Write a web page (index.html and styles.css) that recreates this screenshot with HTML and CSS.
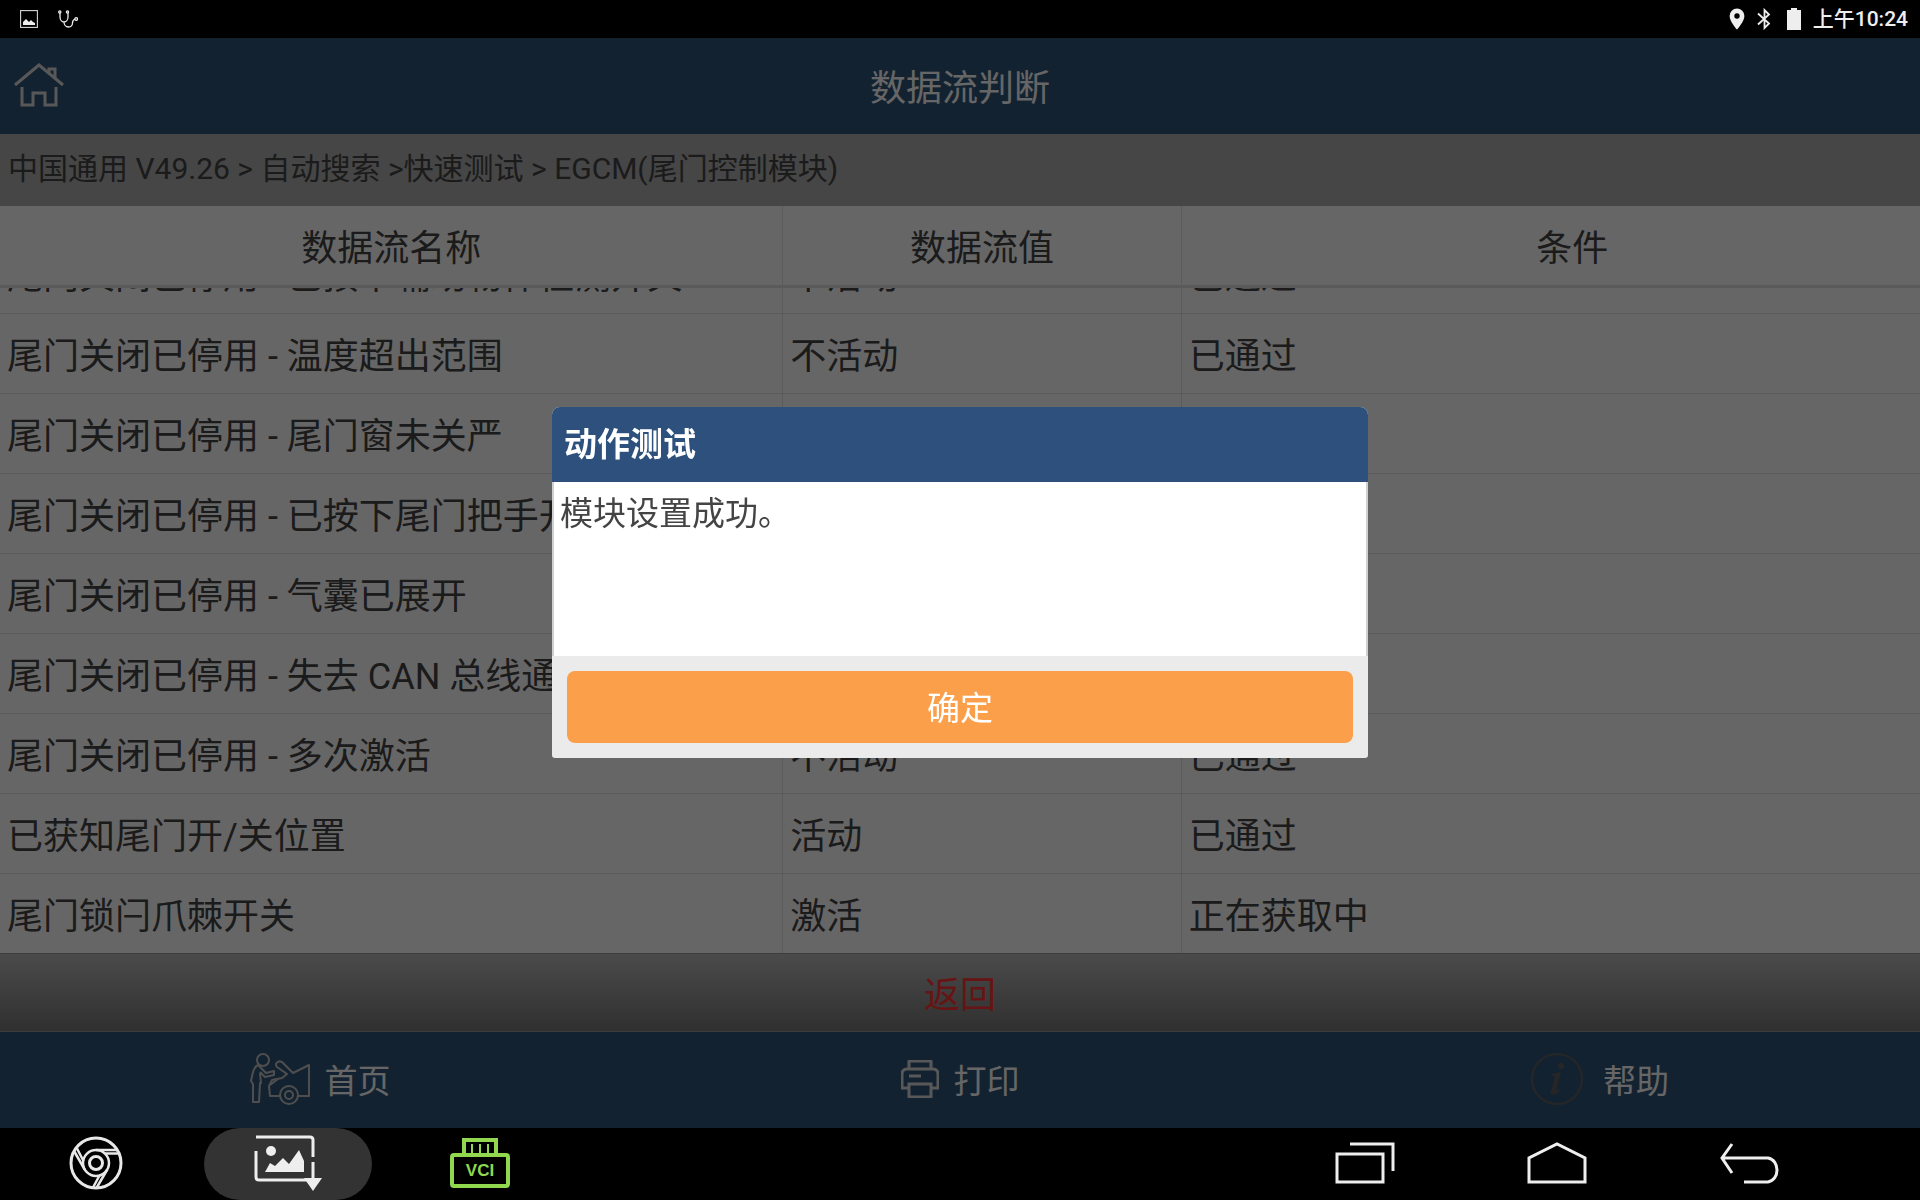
FILE: index.html
```html
<!DOCTYPE html>
<html lang="zh-CN">
<head>
    <meta charset="UTF-8">
    <meta name="viewport" content="width=device-width, initial-scale=1.0">
    <title>数据流判断</title>
    <link rel="stylesheet" href="styles.css">
</head>
<body>
    <!-- system status bar -->
    <div class="status-bar">
        <div class="status-left">
            <svg width="18" height="18" viewBox="0 0 18 18">
                <rect x="0.500" y="0.500" width="17" height="17" fill="none" stroke="#ccc" stroke-width="1.300"/>
                <path d="M3 15v-3l3-3 3 3 2-2 2 2 2 1v2z" fill="#eee"/>
            </svg>
            <svg width="20" height="18" viewBox="0 0 20 18" fill="none" stroke="#eee" stroke-width="1.3">
                <circle cx="1.8" cy="2" r="1.1"/>
                <circle cx="9.5" cy="2" r="1.1"/>
                <circle cx="18.2" cy="9" r="1.3"/>
                <path d="M2 3v4c0 3 2 5 4 5s4-2 4-5V3M6 12c0 3 2 5 4.500 5s4-2 4-4c0-2 1-3.500 2.500-4"/>
            </svg>
        </div>
        <div class="status-right">
            <svg width="16" height="22" viewBox="0 0 16 22">
                <path fill-rule="evenodd" d="M8 0.500A7.400 7.400 0 0 0 .6 8C.6 13.500 8 21.500 8 21.500S15.400 13.500 15.400 8A7.400 7.400 0 0 0 8 .5zM8 5.300a2.700 2.700 0 1 1 0 5.400 2.700 2.700 0 0 1 0-5.400z" fill="#eee"/>
            </svg>
            <svg width="18" height="22" viewBox="0 0 18 22" fill="none" stroke="#eee" stroke-width="1.800">
                <path d="M1 5.500l11 10-4.500 4.500V2l4.500 4.500-11 10"/>
            </svg>
            <svg width="14" height="22" viewBox="0 0 14 22">
                <path d="M4 0h6v2h4v20H0V2h4z" fill="#eee"/>
            </svg>
            <span class="clock">上午10:24</span>
        </div>
    </div>

    <div class="app">
        <header>
            <button class="home-btn" aria-label="主页">
                <svg width="50" height="44" viewBox="0 0 50 44" fill="none" stroke="#ddd" stroke-width="3">
                    <path d="M1 22L25 2l24 20"/>
                    <path d="M35 10V6h6v10"/>
                    <path d="M8 24v18h11V30h12v12h11V24"/>
                </svg>
            </button>
            <h1>数据流判断</h1>
        </header>

        <div class="breadcrumb">中国通用 V49.26 &gt; 自动搜索 &gt;快速测试 &gt; EGCM(尾门控制模块)</div>

        <div class="table-wrap" id="tableWrap">
            <table>
                <colgroup>
                    <col class="col-name">
                    <col class="col-value">
                    <col>
                </colgroup>
                <thead>
                    <tr>
                        <th>数据流名称</th>
                        <th>数据流值</th>
                        <th>条件</th>
                    </tr>
                </thead>
                <tbody>
                    <tr>
                        <td>尾门关闭已停用 - 已按下辅助物体检测开关</td>
                        <td>不活动</td>
                        <td>已通过</td>
                    </tr>
                    <tr>
                        <td>尾门关闭已停用 - 温度超出范围</td>
                        <td>不活动</td>
                        <td>已通过</td>
                    </tr>
                    <tr>
                        <td>尾门关闭已停用 - 尾门窗未关严</td>
                        <td>不活动</td>
                        <td>已通过</td>
                    </tr>
                    <tr>
                        <td>尾门关闭已停用 - 已按下尾门把手开关</td>
                        <td>不活动</td>
                        <td>已通过</td>
                    </tr>
                    <tr>
                        <td>尾门关闭已停用 - 气囊已展开</td>
                        <td>不活动</td>
                        <td>已通过</td>
                    </tr>
                    <tr>
                        <td>尾门关闭已停用 - 失去 CAN 总线通信</td>
                        <td>不活动</td>
                        <td>已通过</td>
                    </tr>
                    <tr>
                        <td>尾门关闭已停用 - 多次激活</td>
                        <td>不活动</td>
                        <td>已通过</td>
                    </tr>
                    <tr>
                        <td>已获知尾门开/关位置</td>
                        <td>活动</td>
                        <td>已通过</td>
                    </tr>
                    <tr>
                        <td>尾门锁闩爪棘开关</td>
                        <td>激活</td>
                        <td>正在获取中</td>
                    </tr>
                </tbody>
            </table>
        </div>

        <button class="back-btn">返回</button>

        <footer>
            <button class="footer-btn">
                <svg width="60" height="52" viewBox="0 0 60 52" fill="none" stroke="#c4c4c4" stroke-width="2" stroke-linejoin="round">
                    <circle cx="13" cy="7" r="6"/>
                    <path d="M8 12c-4 2-5 6-7 16l2 3v18h6l1-19 1 0-1-10M8 12l3 3 5 5 8-2v4l-9 2-5-5"/>
                    <path d="M30 43H20l-1-10 3-6 10-2 5-4-10-7c-3-3 1-7 5-5l11 11 16-8v31H48"/>
                    <path d="M20 32l8-6"/>
                    <circle cx="39" cy="42" r="9"/>
                    <circle cx="39" cy="42" r="4"/>
                </svg>
                首页
            </button>
            <button class="footer-btn">
                <svg width="38" height="38" viewBox="0 0 38 38" fill="none" stroke="#ddd" stroke-width="3">
                    <path d="M8 9V1h22v8"/>
                    <path d="M8 28H1V14c0-3 2-5 5-5h26c3 0 5 2 5 5v14h-7"/>
                    <path d="M8 24h22v13H8z"/>
                    <path d="M8 16h12"/>
                </svg>
                打印
            </button>
            <button class="footer-btn help">
                <svg width="52" height="52" viewBox="0 0 52 52">
                    <circle cx="26" cy="26" r="25" fill="none" stroke="#626060" stroke-width="2"/>
                    <circle cx="30" cy="13" r="3" fill="#626060"/>
                    <path d="M21 21l9-2-5 19 4-2-1 3c-3 3-9 4-8 0l4-16-4 0z" fill="#626060"/>
                </svg>
                帮助
            </button>
        </footer>

        <!-- Modal Structure -->
        <div class="modal" id="modal">
            <div class="modal-content" role="dialog" aria-labelledby="modalTitle">
                <h2 id="modalTitle">动作测试</h2>
                <p>模块设置成功。</p>
                <div class="modal-footer">
                    <button class="ok-btn" id="okBtn">确定</button>
                </div>
            </div>
        </div>
    </div>

    <!-- system navigation bar -->
    <nav>
        <button class="nav-btn" aria-label="Chrome">
            <svg width="54" height="54" viewBox="0 0 54 54" fill="none" stroke="#e8e8e8" stroke-width="2.500">
                <circle cx="27" cy="27" r="25" stroke-width="3"/>
                <circle cx="27" cy="27" r="13"/>
                <circle cx="27" cy="27" r="6.500" stroke-width="3"/>
                <path d="M27 14h21.500M36 17.500h14"/>
                <path d="M15.700 33.500L5 15M14.500 25L8 12.500"/>
                <path d="M38.300 33.500L27.500 52M30.500 39.500L24 51.500"/>
            </svg>
        </button>
        <button class="nav-btn active" aria-label="截图">
            <svg width="70" height="58" viewBox="0 0 70 58" fill="none" stroke="#eee" stroke-width="3">
                <path d="M3 3h54q3 0 3 3v17M60 28v18M3 17v26q0 3 3 3h48"/>
                <circle cx="18" cy="17" r="5" fill="#eee" stroke="none"/>
                <path d="M12 38l5-9 5 3 8-8 6 6 10-14 5 11v11z" fill="#eee" stroke="none"/>
                <path d="M51 44h18l-9 13z" fill="#eee" stroke="none"/>
            </svg>
        </button>
        <button class="nav-btn" aria-label="VCI">
            <svg width="60" height="50" viewBox="0 0 60 50" fill="none" stroke="#92d84e" stroke-width="4">
                <rect x="2" y="17" width="56" height="31" rx="2"/>
                <path d="M14 16V2h32v14"/>
                <path d="M22 6v9M30 6v9M38 6v9" stroke-width="2"/>
                <text x="30" y="38" class="vci-text">VCI</text>
            </svg>
        </button>
        <div class="nav-space"></div>
        <button class="nav-btn" aria-label="最近任务">
            <svg width="60" height="42" viewBox="0 0 60 42" fill="none" stroke="#eee" stroke-width="3">
                <path d="M2 12h46v28H2zM15 2h43v27"/>
            </svg>
        </button>
        <button class="nav-btn" aria-label="主屏幕">
            <svg width="60" height="42" viewBox="0 0 60 42" fill="none" stroke="#eee" stroke-width="3">
                <path d="M2 40V16L30 2l28 14v24z"/>
            </svg>
        </button>
        <button class="nav-btn" aria-label="后退">
            <svg width="60" height="42" viewBox="0 0 60 42" fill="none" stroke="#eee" stroke-width="3">
                <path d="M13 2L3 16l10 15M3 16h46c12 2 12 22 0 24H25"/>
            </svg>
        </button>
    </nav>

    <script>
        // Show the newest rows
        var tableWrap = document.getElementById("tableWrap");
        tableWrap.scrollTop = tableWrap.scrollHeight;

        document.getElementById("okBtn").onclick = function() {
            document.getElementById("modal").style.display = "none";
        }
    </script>
</body>
</html>
```
FILE: styles.css
```css
* {
    box-sizing: border-box;
}

body {
    margin: 0;
    height: 100vh;
    display: flex;
    flex-direction: column;
    background-color: #000;
    color: #444;
    font-family: Roboto, "Noto Sans CJK SC", sans-serif;
    font-size: 36px;
}

button {
    font-family: inherit;
    border: none;
    padding: 0 0 2px;
    cursor: pointer;
}

svg {
    display: block;
    flex-shrink: 0;
}

/* Status bar */
.status-bar {
    height: 38px;
    padding: 0 12px 0 20px;
    display: flex;
    align-items: center;
    justify-content: space-between;
}

.status-left {
    display: flex;
    gap: 20px;
}

.status-right {
    display: flex;
    align-items: center;
    gap: 12px;
}

.clock {
    color: #eee;
    font-size: 21px;
    font-weight: 500;
    line-height: 24px;
}

/* App */
.app {
    flex: 1;
    min-height: 0;
    position: relative;
    display: flex;
    flex-direction: column;
    background-color: #fff;
}

header {
    height: 96px;
    flex-shrink: 0;
    display: grid;
    grid-template-columns: 1fr auto 1fr;
    align-items: center;
    padding: 0 14px 2px;
    background-color: #305578;
}

.home-btn {
    justify-self: start;
    padding: 0;
    background: none;
}

h1 {
    margin: 0;
    color: #fff;
    font-size: 36px;
    font-weight: 400;
}

.breadcrumb {
    padding: 0 8px 2px;
    font-size: 30px;
    line-height: 70px;
    flex-shrink: 0;
    background-color: #afafaf;
}

.table-wrap {
    flex: 1;
    min-height: 0;
    overflow-y: auto;
    scrollbar-width: none;
}

table {
    width: 100%;
    table-layout: fixed;
    border-collapse: separate;
    border-spacing: 0;
}

.col-name {
    width: 40.8%;
}

.col-value {
    width: 20.75%;
}

th, td {
    height: 80px;
    padding: 0 7px 2px;
    font-weight: 400;
    text-align: left;
    white-space: nowrap;
    border-right: 1px solid #e4e4e4;
}

td {
    border-top: 1px solid #e4e4e4;
}

th:last-child, td:last-child {
    border-right: none;
}

th {
    position: sticky;
    top: 0;
    height: 82px;
    text-align: center;
    background-color: #fff;
    border-bottom: 3px solid #e0e0e0;
}

th:last-child {
    padding-left: 50px;
}

.back-btn {
    height: 79px;
    flex-shrink: 0;
    color: #f33;
    font-size: 36px;
    background: linear-gradient(180deg, #bbb 0%, #787878 100%);
    border-top: 1px solid #999;
    border-bottom: 1px solid #999;
}

footer {
    height: 96px;
    flex-shrink: 0;
    display: flex;
    background-color: #305578;
}

.footer-btn {
    flex: 1;
    display: flex;
    align-items: center;
    justify-content: center;
    gap: 15px;
    color: #fff;
    font-size: 33px;
    background: none;
}

.footer-btn.help {
    gap: 20px;
}

/* Modal styles */
.modal {
    position: absolute;
    inset: 0;
    z-index: 1;
    display: flex;
    align-items: center;
    justify-content: center;
    padding-bottom: 2px;
    background-color: rgba(0, 0, 0, 0.6);
}

.modal-content {
    width: 42.5%;
    border-radius: 8px 8px 3px 3px;
    overflow: hidden;
    background-color: #ebebeb;
    font-size: 33px;
}

.modal-content h2 {
    margin: 0;
    padding: 0 12px;
    color: #fff;
    font-size: 33px;
    line-height: 75px;
    background-color: #2d517c;
}

.modal-content p {
    margin: 0;
    min-height: 174px;
    padding: 8px 6px;
    line-height: 48px;
    background-color: #fff;
    border-left: 2px solid #d0d0d0;
    border-right: 2px solid #d0d0d0;
}

.modal-footer {
    padding: 15px;
}

.ok-btn {
    display: block;
    width: 100%;
    height: 72px;
    color: #fff;
    font-size: 33px;
    background-color: #fb9f4b;
    border-radius: 8px;
}

/* Navigation bar */
nav {
    height: 72px;
    padding-right: 75px;
    display: flex;
}

.nav-btn {
    width: 10%;
    max-width: 192px;
    flex-basis: 192px;
    display: flex;
    align-items: center;
    justify-content: center;
    background: none;
}

.nav-btn.active {
    flex-basis: 168px;
    margin: 0 12px;
    background-color: #333;
    border-radius: 36px;
}

.nav-space {
    flex: 1;
}

.vci-text {
    fill: #92d84e;
    stroke: none;
    font-family: "Liberation Sans", sans-serif;
    font-size: 17px;
    font-weight: 700;
    text-anchor: middle;
}
```
